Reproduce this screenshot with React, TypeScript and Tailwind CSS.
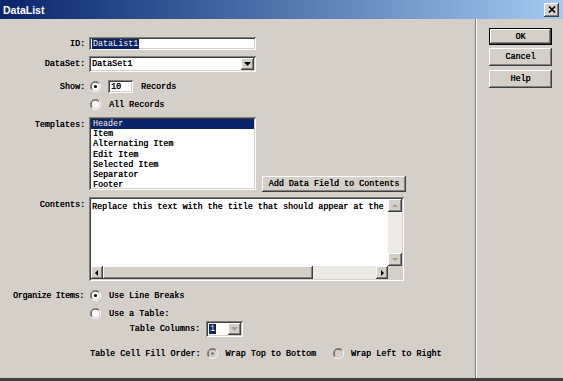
import type { ReactNode } from 'react';

const sunken =
  'shadow-[inset_1px_1px_0_#808080,inset_-1px_-1px_0_#ffffff,inset_2px_2px_0_#404040,inset_-2px_-2px_0_#d4d0c8]';
const raised =
  'shadow-[inset_-1px_-1px_0_#404040,inset_1px_1px_0_#ffffff,inset_-2px_-2px_0_#808080,inset_2px_2px_0_#d4d0c8]';

function Radio({ checked, disabled }: { checked?: boolean; disabled?: boolean }) {
  return (
    <svg width="11" height="11" viewBox="0 0 12 12" className="shrink-0">
      <path d="M10.2 2.2A5.5 5.5 0 0 0 1.8 9.8" fill="none" stroke="#808080" strokeWidth="1" />
      <path d="M9.4 2.9A4.5 4.5 0 0 0 2.6 9.1" fill="none" stroke="#404040" strokeWidth="1" />
      <circle cx="6" cy="6" r="4" fill={disabled ? '#d4d0c8' : '#ffffff'} />
      <path d="M1.8 9.8A5.5 5.5 0 0 0 10.2 2.2" fill="none" stroke="#ffffff" strokeWidth="1" />
      {checked && <circle cx="6" cy="6" r="1.7" fill={disabled ? '#808080' : '#000000'} />}
    </svg>
  );
}

function Arrow({ dir, grey }: { dir: 'up' | 'down' | 'left' | 'right'; grey?: boolean }) {
  const pts = {
    up: '1,5 7,5 4,2',
    down: '1,2 7,2 4,5',
    left: '5,1 5,7 2,4',
    right: '3,1 3,7 6,4',
  }[dir];
  return (
    <svg width="8" height="8" viewBox="0 0 8 8">
      <polygon points={pts} fill={grey ? '#a0a0a0' : '#000000'} />
    </svg>
  );
}

function ScrollBtn({ children, className = '' }: { children: ReactNode; className?: string }) {
  return (
    <div className={`flex items-center justify-center bg-[#d4d0c8] ${raised} ${className}`}>{children}</div>
  );
}

function Button({ children, def, className = '' }: { children: ReactNode; def?: boolean; className?: string }) {
  return (
    <div className={`${def ? 'border border-black' : ''} ${className}`}>
      <div className={`flex h-full items-center justify-center bg-[#d4d0c8] ${raised}`}>{children}</div>
    </div>
  );
}

function Label({ children }: { children: ReactNode }) {
  return <div className="w-[88px] shrink-0 pr-[3px] text-right">{children}</div>;
}

export default function App() {
  const templates = ['Header', 'Item', 'Alternating Item', 'Edit Item', 'Selected Item', 'Separator', 'Footer'];

  return (
    <div className="h-[381px] w-[563px] overflow-hidden border-b-[3px] border-[#404040] bg-[#d4d0c8] font-['Liberation_Mono',monospace] text-[8.4px] leading-[10px] text-black [text-shadow:0.2px_0_0_#000]">
      {/* TITLE BAR */}
      <div className="flex h-[19px] items-center justify-between bg-gradient-to-r from-[#0a246a] to-[#a6caf0] pl-[3px] pr-[4px] [text-shadow:none]">
        <span className="font-['Liberation_Sans',Arial,sans-serif] text-[10.5px] font-bold text-white">DataList</span>
        <div className={`flex h-[14px] w-[15px] items-center justify-center bg-[#d4d0c8] ${raised}`}>
          <svg width="8" height="7" viewBox="0 0 8 7">
            <path d="M1 0.5 L7 6.5 M7 0.5 L1 6.5" stroke="#000" strokeWidth="1.6" />
          </svg>
        </div>
      </div>

      <div className="flex h-[359px]">
        {/* FORM */}
        <div className="flex w-[476px] flex-col border-r border-r-[#808080] pt-[18px] shadow-[1px_0_0_#ffffff]">
          {/* ID */}
          <div className="flex h-[13px] items-center">
            <Label>ID:</Label>
            <div className={`ml-[1px] flex h-[13px] w-[167px] items-center bg-white pl-[3px] ${sunken}`}>
              <span className="bg-[#0a246a] px-[1px] text-white">DataList1</span>
            </div>
          </div>

          {/* DATASET */}
          <div className="mt-[6px] flex h-[16px] items-center">
            <Label>DataSet:</Label>
            <div className={`ml-[1px] flex h-[16px] w-[167px] items-center justify-between bg-white pl-[3px] pr-[2px] ${sunken}`}>
              <span>DataSet1</span>
              <ScrollBtn className="h-[12px] w-[13px]">
                <svg width="7" height="4" viewBox="0 0 7 4">
                  <polygon points="0,0 7,0 3.5,4" fill="#000" />
                </svg>
              </ScrollBtn>
            </div>
          </div>

          {/* SHOW */}
          <div className="mt-[8px] flex h-[13px] items-center">
            <Label>Show:</Label>
            <div className="ml-[2px] flex items-center">
              <Radio checked />
              <div className={`ml-[7px] flex h-[13px] w-[25px] items-center bg-white pl-[3px] ${sunken}`}>10</div>
              <span className="ml-[8px]">Records</span>
            </div>
          </div>

          <div className="mt-[5px] flex h-[13px] items-center">
            <div className="w-[88px]" />
            <div className="ml-[2px] flex items-center">
              <Radio />
              <span className="ml-[8px]">All Records</span>
            </div>
          </div>

          {/* TEMPLATES */}
          <div className="mt-[6px] flex h-[75px] items-start">
            <div className="w-[88px] shrink-0 pr-[3px] pt-[3px] text-right">Templates:</div>
            <div className={`ml-[1px] h-[73px] w-[167px] bg-white p-[2px] ${sunken}`}>
              {templates.map((t, i) => (
                <div
                  key={t}
                  className={`h-[10.2px] pl-[2px] leading-[10.2px] ${i === 0 ? 'bg-[#0a246a] text-white' : ''}`}
                >
                  {t}
                </div>
              ))}
            </div>
            <Button className="ml-[6px] mt-[59px] h-[16px] w-[144px]">Add Data Field to Contents</Button>
          </div>

          {/* CONTENTS */}
          <div className="mt-[5px] flex h-[84px] items-start">
            <div className="w-[88px] shrink-0 pr-[3px] pt-[3px] text-right">Contents:</div>
            <div className={`ml-[1px] flex h-[84px] w-[315px] flex-col bg-white p-[2px] ${sunken}`}>
              <div className="flex flex-1">
                <div className="flex-1 overflow-hidden whitespace-nowrap pl-[1px] pt-[3px]">
                  Replace this text with the title that should appear at the
                </div>
                <div className="flex w-[14px] flex-col bg-[#ebeae6]">
                  <ScrollBtn className="h-[13px]">
                    <Arrow dir="up" grey />
                  </ScrollBtn>
                  <div className="flex-1" />
                  <ScrollBtn className="h-[13px]">
                    <Arrow dir="down" grey />
                  </ScrollBtn>
                </div>
              </div>
              <div className="flex h-[13px]">
                <div className="flex flex-1 bg-[#ebeae6]">
                  <ScrollBtn className="w-[12px]">
                    <Arrow dir="left" />
                  </ScrollBtn>
                  <div className={`w-[210px] bg-[#d4d0c8] ${raised}`} />
                  <div className="flex-1" />
                  <ScrollBtn className="w-[12px]">
                    <Arrow dir="right" />
                  </ScrollBtn>
                </div>
                <div className="w-[14px] bg-[#d4d0c8]" />
              </div>
            </div>
          </div>

          {/* ORGANIZE ITEMS */}
          <div className="mt-[8px] flex h-[13px] items-center">
            <div className="w-[88px] shrink-0 pr-[4px] text-right tracking-[-0.3px]">Organize Items:</div>
            <div className="ml-[2px] flex items-center">
              <Radio checked />
              <span className="ml-[8px]">Use Line Breaks</span>
            </div>
          </div>

          <div className="mt-[5px] flex h-[13px] items-center">
            <div className="w-[88px]" />
            <div className="ml-[2px] flex items-center">
              <Radio />
              <span className="ml-[8px]">Use a Table:</span>
            </div>
          </div>

          {/* TABLE COLUMNS */}
          <div className="mt-[1px] flex h-[16px] items-center">
            <div className="w-[202px] shrink-0 pr-[2px] text-right">Table Columns:</div>
            <div className={`ml-[4px] flex h-[16px] w-[37px] items-center justify-between bg-white pl-[3px] pr-[2px] ${sunken}`}>
              <span className="bg-[#0a246a] px-[1px] text-white">1</span>
              <ScrollBtn className="h-[12px] w-[13px]">
                <svg width="7" height="4" viewBox="0 0 7 4">
                  <polygon points="0,0 7,0 3.5,4" fill="#a0a0a0" />
                </svg>
              </ScrollBtn>
            </div>
          </div>

          {/* FILL ORDER */}
          <div className="mt-[10px] flex h-[13px] items-center pl-[90px]">
            <span>Table Cell Fill Order:</span>
            <div className="ml-[6px] flex items-center">
              <Radio checked disabled />
              <span className="ml-[8px]">Wrap Top to Bottom</span>
            </div>
            <div className="ml-[17px] flex items-center">
              <Radio disabled />
              <span className="ml-[7px]">Wrap Left to Right</span>
            </div>
          </div>
        </div>

        {/* BUTTONS */}
        <div className="flex flex-col gap-[3px] pl-[13px] pt-[9px]">
          <Button def className="h-[17px] w-[63px]">OK</Button>
          <Button className="h-[18px] w-[63px]">Cancel</Button>
          <Button className="mt-[1px] h-[18px] w-[63px]">Help</Button>
        </div>
      </div>
    </div>
  );
}
